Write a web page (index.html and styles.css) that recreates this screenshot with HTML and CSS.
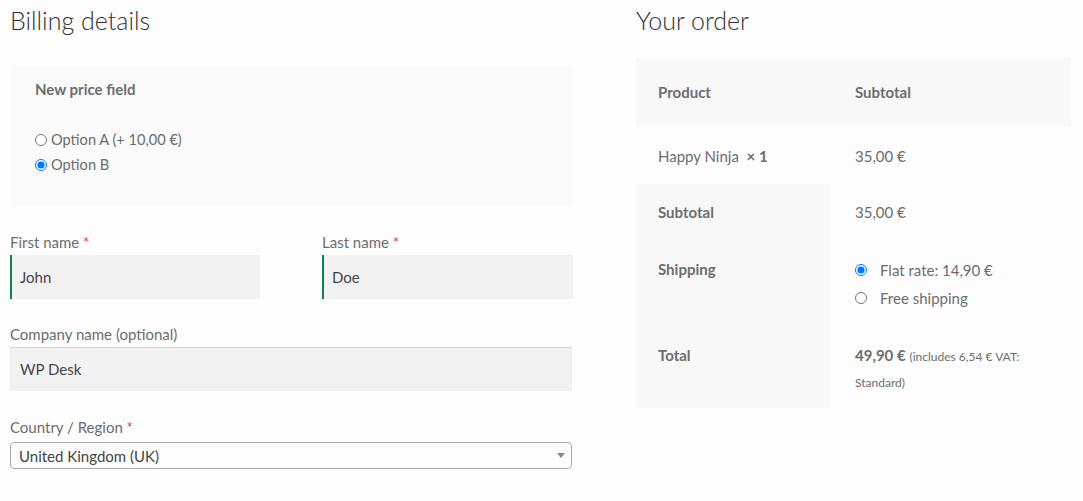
FILE: index.html
```html
<!DOCTYPE html>
<html lang="en">
<head>
<meta charset="utf-8">
<title>Checkout</title>
<link rel="stylesheet" href="styles.css">
</head>
<body>
<div class="page">
  <section class="billing">
    <h3 class="heading">Billing details</h3>
    <div class="price-field">
      <div class="pf-title">New price field</div>
      <div class="pf-options">
        <label class="pf-option"><input type="radio" name="pf"> Option A (+ 10,00 €)</label>
        <label class="pf-option"><input type="radio" name="pf" checked> Option B</label>
      </div>
    </div>
    <div class="name-row">
      <div class="field">
        <label class="field-label">First name <span class="req">*</span></label>
        <div class="input valid">John</div>
      </div>
      <div class="field">
        <label class="field-label">Last name <span class="req">*</span></label>
        <div class="input valid">Doe</div>
      </div>
    </div>
    <div class="field company">
      <label class="field-label">Company name (optional)</label>
      <div class="input shadow">WP Desk</div>
    </div>
    <div class="field country">
      <label class="field-label">Country / Region <span class="req">*</span></label>
      <div class="select"><span>United Kingdom (UK)</span><span class="arrow"></span></div>
    </div>
  </section>
  <section class="order">
    <h3 class="heading">Your order</h3>
    <div class="order-table">
      <div class="row head">
        <div class="c1">Product</div>
        <div class="c2">Subtotal</div>
      </div>
      <div class="row item">
        <div class="c1">Happy Ninja&nbsp; <strong class="qty">×&nbsp;1</strong></div>
        <div class="c2">35,00 €</div>
      </div>
      <div class="row foot">
        <div class="c1 th">Subtotal</div>
        <div class="c2">35,00 €</div>
      </div>
      <div class="row foot ship">
        <div class="c1 th">Shipping</div>
        <div class="c2">
          <ul class="methods">
            <li><label><input type="radio" name="ship" checked><span>Flat rate: 14,90 €</span></label></li>
            <li><label><input type="radio" name="ship"><span>Free shipping</span></label></li>
          </ul>
        </div>
      </div>
      <div class="row foot total">
        <div class="c1 th">Total</div>
        <div class="c2"><strong>49,90 €</strong> <small class="tax">(includes 6,54 € VAT: Standard)</small></div>
      </div>
    </div>
  </section>
</div>
</body>
</html>
```

FILE: styles.css
```css
html, body {
  margin: 0;
  padding: 0;
  background: #fdfdfd;
}
body {
  font-family: "Lato", "Liberation Sans", sans-serif;
  color: #6d6d6d;
  font-size: 15px;
}
.page {
  display: flex;
  gap: 64px;
  padding: 0 12px 0 10px;
}
.billing {
  width: 562px;
  flex: none;
}
.order {
  width: 435px;
  flex: none;
}
.heading {
  margin: 0;
  font-size: 25px;
  font-weight: 300;
  color: #333;
  line-height: 41px;
  height: 42px;
}
.price-field {
  margin-top: 25px;
  background: #fafafa;
  padding: 9px 26px 28px 25px;
}
.pf-title {
  font-weight: 700;
  line-height: 26px;
  font-size: 15px;
  color: #6d6d6d;
}
.pf-options {
  margin-top: 25px;
  font-size: 14.6px;
}
.pf-option {
  display: flex;
  align-items: center;
  line-height: 25px;
  height: 25px;
}
.pf-option input {
  margin: 0 4px 0 0;
  width: 12px;
  height: 12px;
}
.name-row {
  display: grid;
  grid-template-columns: 250px 251px;
  column-gap: 62px;
  margin-top: 24px;
}
.field-label {
  display: block;
  line-height: 26px;
  height: 26px;
}
.req {
  color: #e2401c;
}
.input {
  height: 44px;
  line-height: 44px;
  background: #f2f2f2;
  color: #43454b;
  padding-left: 10px;
  box-sizing: border-box;
}
.input.valid {
  border-left: 2px solid #0f834d;
  padding-left: 8px;
}
.input.shadow {
  box-shadow: inset 0 1px 1px rgba(0, 0, 0, 0.13);
}
.company {
  margin-top: 22px;
}
.country {
  margin-top: 23px;
}
.country .field-label {
  height: 28px;
  line-height: 26px;
}
.select {
  display: flex;
  align-items: center;
  justify-content: space-between;
  height: 27px;
  box-sizing: border-box;
  border: 1px solid #aaa;
  border-radius: 4px;
  background: #fdfdfd;
  color: #444;
  padding: 0 6px 0 8px;
}
.arrow {
  width: 0;
  height: 0;
  border-left: 4px solid transparent;
  border-right: 4px solid transparent;
  border-top: 5px solid #888;
}
.order-table {
  margin-top: 16px;
  font-size: 15px;
}
.row {
  display: flex;
}
.row .c1 {
  width: 195px;
  box-sizing: border-box;
  padding-left: 22px;
}
.row .c2 {
  flex: 1;
  padding-left: 24px;
}
.row.head {
  background: #f8f8f8;
  font-weight: 700;
  line-height: 26px;
  padding: 21px 0 22px;
}
.row.item .c1, .row.item .c2 {
  padding-top: 16px;
  padding-bottom: 15px;
  line-height: 26px;
}
.qty {
  font-weight: 700;
}
.row.foot .c1, .row.foot .c2 {
  padding-top: 15px;
  padding-bottom: 16px;
  line-height: 26px;
}
.th {
  background: #f8f8f8;
  font-weight: 700;
}
.row.ship .c1, .row.ship .c2 {
  padding-top: 15px;
  padding-bottom: 16px;
}
.methods {
  list-style: none;
  margin: 0;
  padding: 0;
}
.methods li {
  height: 28px;
  line-height: 28px;
}
.methods label {
  display: flex;
  align-items: center;
}
.methods input {
  margin: 0 13px 0 0;
  width: 12px;
  height: 12px;
}
.row.total .c1, .row.total .c2 {
  padding-top: 14px;
  padding-bottom: 14px;
}
.row.total .c2 {
  line-height: 26px;
  padding-right: 30px;
}
.row.total strong {
  font-weight: 700;
}
.tax {
  font-size: 12px;
  line-height: 1;
}
```
